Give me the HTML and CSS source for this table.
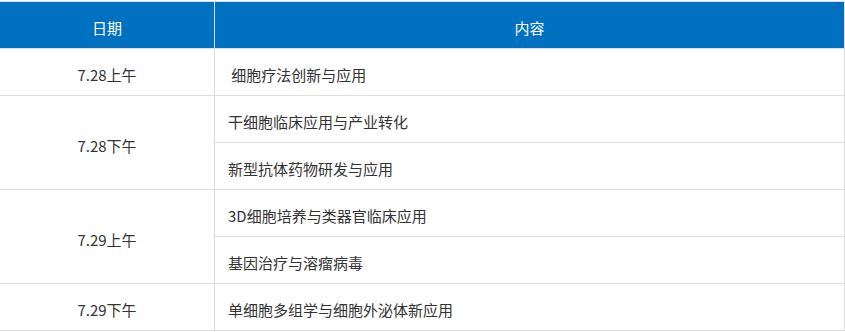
FILE: index.html
```html
<!DOCTYPE html>
<html lang="zh-CN">
<head>
<meta charset="utf-8">
<title>日程</title>
<link rel="stylesheet" href="styles.css">
</head>
<body>
<table class="schedule">
  <thead>
    <tr>
      <th class="col-date">日期</th>
      <th class="col-topic">内容</th>
    </tr>
  </thead>
  <tbody>
    <tr>
      <td class="date">7.28上午</td>
      <td class="topic">&nbsp;细胞疗法创新与应用</td>
    </tr>
    <tr>
      <td class="date" rowspan="2">7.28下午</td>
      <td class="topic">干细胞临床应用与产业转化</td>
    </tr>
    <tr>
      <td class="topic">新型抗体药物研发与应用</td>
    </tr>
    <tr>
      <td class="date" rowspan="2">7.29上午</td>
      <td class="topic">3D细胞培养与类器官临床应用</td>
    </tr>
    <tr>
      <td class="topic">基因治疗与溶瘤病毒</td>
    </tr>
    <tr>
      <td class="date">7.29下午</td>
      <td class="topic">单细胞多组学与细胞外泌体新应用</td>
    </tr>
  </tbody>
</table>
</body>
</html>
```

FILE: styles.css
```css
html, body {
  margin: 0;
  padding: 0;
  background: #ffffff;
}

body {
  font-family: "Noto Sans CJK SC", "Noto Sans", sans-serif;
  font-size: 15px;
  color: #333333;
}

.schedule {
  border-collapse: collapse;
  table-layout: fixed;
  width: 846px;
  margin: 1px 0 0 -1px;
}

.schedule th,
.schedule td {
  border: 1px solid #dddddd;
  height: 40px;
  padding: 6px 0 0 0;
  box-sizing: content-box;
  line-height: 20px;
  vertical-align: middle;
}

.schedule th {
  background: #0070c0;
  color: #ffffff;
  font-weight: normal;
  text-align: center;
}

.col-date {
  width: 214px;
}

.date {
  text-align: center;
}

.schedule .topic {
  text-align: left;
  padding-left: 13px;
}
```
